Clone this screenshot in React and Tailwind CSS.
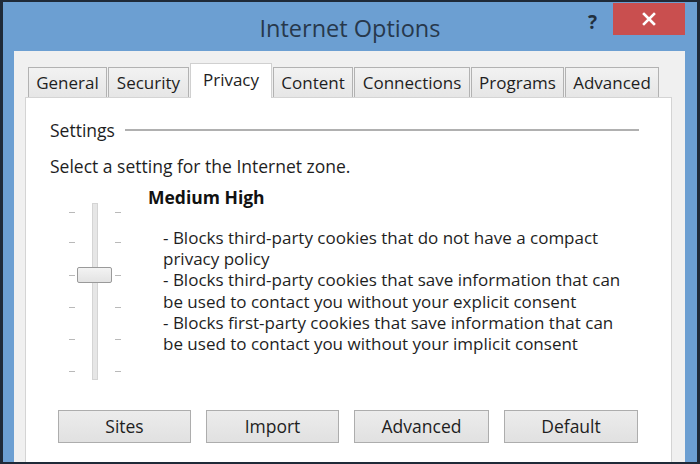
import React from "react";

const tabs = [
  { label: "General", w: "w-[79px]" },
  { label: "Security", w: "w-[81px]" },
  { label: "Privacy", w: "w-[82px]", active: true },
  { label: "Content", w: "w-[80px]" },
  { label: "Connections", w: "w-[116px]" },
  { label: "Programs", w: "w-[93px]" },
  { label: "Advanced", w: "w-[94px]" },
];

function Slider() {
  const ticks = [9, 39, 72, 104, 136, 168];
  return (
    <div className="relative w-[52px] h-[177px] shrink-0">
      <div className="absolute left-[23px] top-0 w-[6px] h-[177px] bg-[#e6e6e6] border border-[#d4d4d4]" />
      {ticks.map((t) => (
        <React.Fragment key={t}>
          <div className="absolute left-0 w-[6px] h-px bg-[#b9b9b9]" style={{ top: t }} />
          <div className="absolute right-0 w-[6px] h-px bg-[#b9b9b9]" style={{ top: t }} />
        </React.Fragment>
      ))}
      <div className="absolute left-[8px] top-[64px] w-[35px] h-[16px] rounded-[2px] border border-[#9a9a9a] bg-gradient-to-b from-[#f3f3f3] to-[#e3e3e3]" />
    </div>
  );
}

function Btn({ children, w }) {
  return (
    <div
      className={`${w} h-[33px] flex items-center justify-center border border-[#adadad] bg-gradient-to-b from-[#ececec] to-[#e1e1e1] text-[17.5px] text-[#1e1e1e]`}
    >
      {children}
    </div>
  );
}

const lines = [
  "- Blocks third-party cookies that do not have a compact",
  "privacy policy",
  "- Blocks third-party cookies that save information that can",
  "be used to contact you without your explicit consent",
  "- Blocks first-party cookies that save information that can",
  "be used to contact you without your implicit consent",
];

export default function App() {
  return (
    <div className="w-[700px] h-[464px] overflow-hidden bg-[#6c9fd2] border-t-2 border-b-2 border-l-[3px] border-r-[3px] border-[#1f2a38] flex flex-col font-['Open_Sans',sans-serif]">
      {/* Title bar */}
      <div className="h-[49px] shrink-0 grid grid-cols-[1fr_auto_1fr]">
        <div />
        <div className="pt-[11px] text-[23.5px] leading-[30px] text-[#27384c]">Internet Options</div>
        <div className="flex justify-end items-start">
          <div className="mt-[9px] mr-[16px] text-[19px] leading-[22px] font-bold text-[#22303f]">?</div>
          <div className="mt-px mr-[12px] w-[72px] h-[32px] bg-[#c94f4f] flex items-center justify-center">
            <svg width="14" height="14" viewBox="0 0 14 14">
              <path d="M2 2 L12 12 M12 2 L2 12" stroke="#ffffff" strokeWidth="2.6" strokeLinecap="square" />
            </svg>
          </div>
        </div>
      </div>

      {/* Content area */}
      <div className="flex-1 min-h-0 ml-[11px] mr-[12px] bg-[#f0f0f0] pl-[11px] pr-[13px] pt-[12px] flex flex-col">
        <div className="flex items-end gap-px pl-[3px] h-[34px] shrink-0">
          {tabs.map((t) =>
            t.active ? (
              <div
                key={t.label}
                className={`${t.w} relative z-10 -mb-px h-[35px] bg-white border border-b-0 border-[#d0d0d0] flex items-start justify-center pt-[3px] text-[17px] text-[#1e1e1e]`}
              >
                {t.label}
              </div>
            ) : (
              <div
                key={t.label}
                className={`${t.w} h-[30px] bg-gradient-to-b from-[#f2f2f2] to-[#e6e6e6] border border-b-0 border-[#b2b2b2] flex items-center justify-center text-[17px] text-[#1e1e1e]`}
              >
                {t.label}
              </div>
            )
          )}
        </div>

        <div className="flex-1 bg-white border border-b-0 border-[#d4d4d4] pl-[24px] pr-[32px] pt-[21px] text-[17.5px] text-[#1e1e1e]">
          <div className="flex items-center gap-[10px] h-[22px] leading-[22px]">
            <span>Settings</span>
            <div className="flex-1 h-[2px] bg-[#b0b0b0]" />
          </div>
          <div className="mt-[14px] leading-[22px]">Select a setting for the Internet zone.</div>

          <div className="mt-[9px] flex">
            <div className="ml-[19px] mt-[17px]">
              <Slider />
            </div>
            <div className="ml-[27px]">
              <div className="font-bold text-[17.5px] leading-[22px] text-[#111]">Medium High</div>
              <div className="mt-[19px] pl-[15px] flex flex-col text-[17px] whitespace-nowrap">
                {lines.map((l) => (
                  <div key={l} className="h-[21.2px] leading-[21.2px]">
                    {l}
                  </div>
                ))}
              </div>
            </div>
          </div>

          <div className="mt-[30px] ml-[8px] flex gap-[15px]">
            <Btn w="w-[133px]">Sites</Btn>
            <Btn w="w-[133px]">Import</Btn>
            <Btn w="w-[135px]">Advanced</Btn>
            <Btn w="w-[134px]">Default</Btn>
          </div>
        </div>
      </div>
    </div>
  );
}
